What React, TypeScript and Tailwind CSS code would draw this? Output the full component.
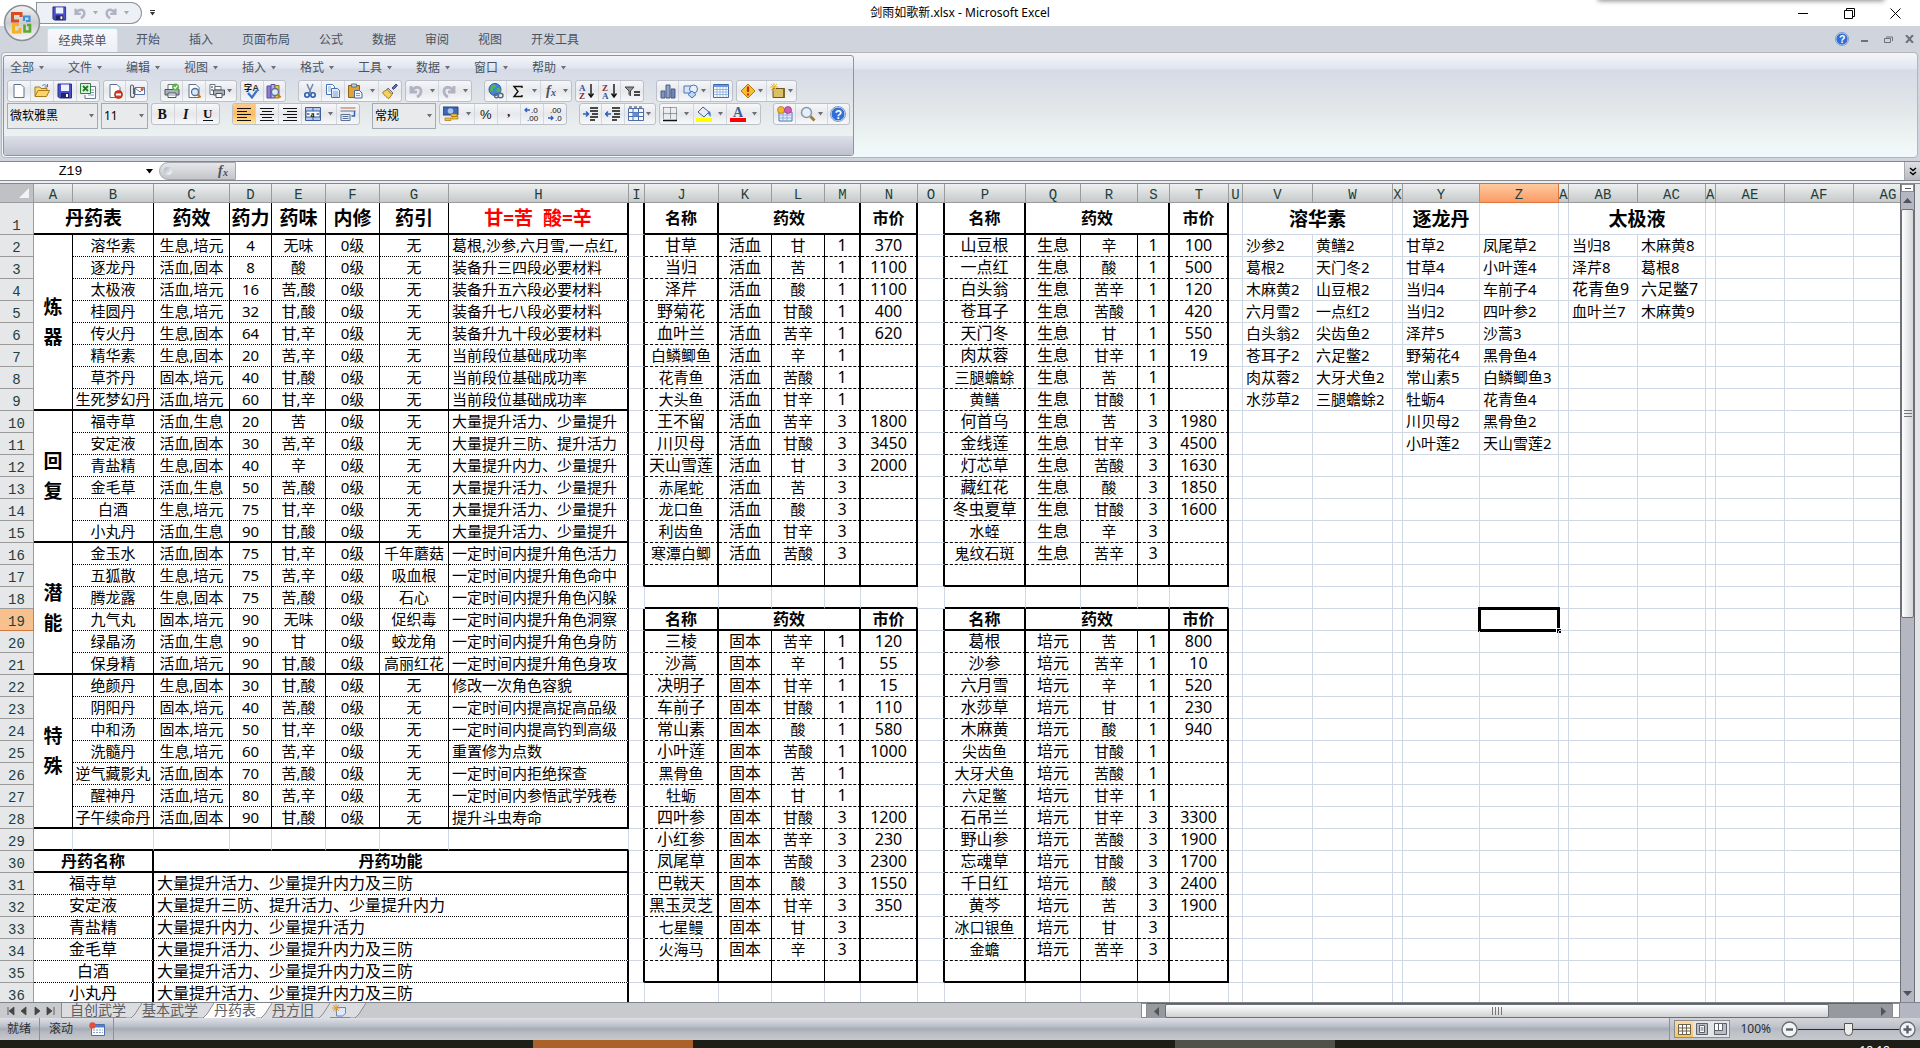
import { ReactNode } from "react";
import clsx from "clsx";

/* ---------- sheet model ---------- */

type Line = "grid" | "thin" | "thick" | "dotted" | "dashed";

type Cell = {
  text?: string;
  size?: 15 | 16 | 19;
  bold?: boolean;
  red?: boolean;
  left?: boolean;
  right?: Line;
  bottom?: Line;
  colSpan?: number;
  rowSpan?: number;
};

const columns: [string, string][] = [
  ["A", "w-[39px]"],
  ["B", "w-[81px]"],
  ["C", "w-[76px]"],
  ["D", "w-[42px]"],
  ["E", "w-[54px]"],
  ["F", "w-[54px]"],
  ["G", "w-[69px]"],
  ["H", "w-[180px]"],
  ["I", "w-[16px]"],
  ["J", "w-[74px]"],
  ["K", "w-[53px]"],
  ["L", "w-[53px]"],
  ["M", "w-[36px]"],
  ["N", "w-[57px]"],
  ["O", "w-[27px]"],
  ["P", "w-[81px]"],
  ["Q", "w-[55px]"],
  ["R", "w-[57px]"],
  ["S", "w-[32px]"],
  ["T", "w-[59px]"],
  ["U", "w-[14px]"],
  ["V", "w-[70px]"],
  ["W", "w-[80px]"],
  ["X", "w-[10px]"],
  ["Y", "w-[77px]"],
  ["Z", "w-[79px]"],
  ["AA", "w-[10px]"],
  ["AB", "w-[69px]"],
  ["AC", "w-[68px]"],
  ["AD", "w-[10px]"],
  ["AE", "w-[69px]"],
  ["AF", "w-[69px]"],
  ["AG", "w-[69px]"],
];

const rows = Array.from({ length: 36 }, (_, i) => i + 1);

const pills = [
  "溶华素 生息,培元 4 无味 无 葛根,沙参,六月雪,一点红,",
  "逐龙丹 活血,固本 8 酸 无 装备升三四段必要材料",
  "太极液 活血,培元 16 苦,酸 无 装备升五六段必要材料",
  "桂圆丹 生息,培元 32 甘,酸 无 装备升七八段必要材料",
  "传火丹 生息,固本 64 甘,辛 无 装备升九十段必要材料",
  "精华素 生息,固本 20 苦,辛 无 当前段位基础成功率",
  "草芥丹 固本,培元 40 甘,酸 无 当前段位基础成功率",
  "生死梦幻丹 活血,培元 60 甘,辛 无 当前段位基础成功率",
  "福寺草 活血,生息 20 苦 无 大量提升活力、少量提升",
  "安定液 活血,固本 30 苦,辛 无 大量提升三防、提升活力",
  "青盐精 生息,固本 40 辛 无 大量提升内力、少量提升",
  "金毛草 活血,生息 50 苦,酸 无 大量提升活力、少量提升",
  "白酒 生息,培元 75 甘,辛 无 大量提升活力、少量提升",
  "小丸丹 活血,生息 90 甘,酸 无 大量提升活力、少量提升",
  "金玉水 活血,固本 75 甘,辛 千年蘑菇 一定时间内提升角色活力",
  "五狐散 生息,培元 75 苦,辛 吸血根 一定时间内提升角色命中",
  "腾龙露 生息,固本 75 苦,酸 石心 一定时间内提升角色闪躲",
  "九气丸 固本,培元 90 无味 促织毒 一定时间内提升角色洞察",
  "绿晶汤 活血,生息 90 甘 蛟龙角 一定时间内提升角色身防",
  "保身精 活血,培元 90 甘,酸 高丽红花 一定时间内提升角色身攻",
  "绝颜丹 生息,固本 30 甘,酸 无 修改一次角色容貌",
  "阴阳丹 固本,培元 40 苦,酸 无 一定时间内提高捉高品级",
  "中和汤 固本,培元 50 甘,辛 无 一定时间内提高钓到高级",
  "洗髓丹 生息,培元 60 苦,辛 无 重置修为点数",
  "逆气藏影丸 活血,固本 70 苦,酸 无 一定时间内拒绝探查",
  "醒神丹 活血,培元 80 苦,辛 无 一定时间内参悟武学残卷",
  "子午续命丹 活血,固本 90 甘,酸 无 提升斗虫寿命",
];

const sections: [string, number, number][] = [
  ["炼器", 2, 9],
  ["回复", 10, 15],
  ["潜能", 16, 21],
  ["特殊", 22, 28],
];

const functions: [string, string][] = [
  ["福寺草", "大量提升活力、少量提升内力及三防"],
  ["安定液", "大量提升三防、提升活力、少量提升内力"],
  ["青盐精", "大量提升内力、少量提升活力"],
  ["金毛草", "大量提升活力、少量提升内力及三防"],
  ["白酒", "大量提升活力、少量提升内力及三防"],
  ["小丸丹", "大量提升活力、少量提升内力及三防"],
];

const huoxue =
  "甘草 甘 1 370|当归 苦 1 1100|泽芹 酸 1 1100|野菊花 甘酸 1 400|血叶兰 苦辛 1 620|白鳞鲫鱼 辛 1|花青鱼 苦酸 1|大头鱼 甘辛 1|王不留 苦辛 3 1800|川贝母 甘酸 3 3450|天山雪莲 甘 3 2000|赤尾蛇 苦 3|龙口鱼 酸 3|利齿鱼 甘辛 3|寒潭白鲫 苦酸 3";
const shengxi =
  "山豆根 辛 1 100|一点红 酸 1 500|白头翁 苦辛 1 120|苍耳子 苦酸 1 420|天门冬 甘 1 550|肉苁蓉 甘辛 1 19|三腿蟾蜍 苦 1|黄鳝 甘酸 1|何首乌 苦 3 1980|金线莲 甘辛 3 4500|灯芯草 苦酸 3 1630|藏红花 酸 3 1850|冬虫夏草 甘酸 3 1600|水蛭 辛 3|鬼纹石斑 苦辛 3";
const guben =
  "三棱 苦辛 1 120|沙蒿 辛 1 55|决明子 甘辛 1 15|车前子 甘酸 1 110|常山素 酸 1 580|小叶莲 苦酸 1 1000|黑骨鱼 苦 1|牡蛎 甘 1|四叶参 甘酸 3 1200|小红参 苦辛 3 230|凤尾草 苦酸 3 2300|巴戟天 酸 3 1550|黑玉灵芝 甘辛 3 350|七星鳗 甘 3|火海马 辛 3";
const peiyuan =
  "葛根 苦 1 800|沙参 苦辛 1 10|六月雪 辛 1 520|水莎草 甘 1 230|木麻黄 酸 1 940|尖齿鱼 甘酸 1|大牙犬鱼 苦酸 1|六足鳖 甘辛 1|石吊兰 甘辛 3 3300|野山参 苦酸 3 1900|忘魂草 甘酸 3 1700|千日红 酸 3 2400|黄芩 苦 3 1900|冰口银鱼 甘 3|金蟾 苦辛 3";

const recipes: [string, string][] = [
  ["V", "沙参2 葛根2 木麻黄2 六月雪2 白头翁2 苍耳子2 肉苁蓉2 水莎草2"],
  ["W", "黄鳝2 天门冬2 山豆根2 一点红2 尖齿鱼2 六足鳖2 大牙犬鱼2 三腿蟾蜍2"],
  ["Y", "甘草2 甘草4 当归4 当归2 泽芹5 野菊花4 常山素5 牡蛎4 川贝母2 小叶莲2"],
  ["Z", "凤尾草2 小叶莲4 车前子4 四叶参2 沙蒿3 黑骨鱼4 白鳞鲫鱼3 花青鱼4 黑骨鱼2 天山雪莲2"],
  ["AB", "当归8 泽芹8 花青鱼9 血叶兰7"],
  ["AC", "木麻黄8 葛根8 六足鳖7 木麻黄9"],
];

function buildSheet() {
  const cells = new Map<string, Cell | null>();
  const put = (col: string, row: number, cell: Cell | null) => cells.set(`${col}${row}`, cell);

  // 丹药表
  put("A", 1, { text: "丹药表", size: 19, bold: true, colSpan: 2, right: "thin", bottom: "thick" });
  put("B", 1, null);
  "药效 药力 药味 内修 药引".split(" ").forEach((text, i) => {
    put("CDEFG"[i], 1, { text, size: 19, bold: true, right: "thin", bottom: "thick" });
  });
  put("H", 1, { text: "甘=苦  酸=辛", size: 19, bold: true, red: true, right: "thick", bottom: "thick" });

  sections.forEach(([text, from, to]) => {
    for (let r = from + 1; r <= to; r++) put("A", r, null);
    put("A", from, { text, size: 19, bold: true, rowSpan: to - from + 1, right: "thin", bottom: "thick" });
  });
  const lastRows = sections.map((s) => s[2]);
  pills.forEach((line, i) => {
    const row = i + 2;
    const bottom: Line = lastRows.includes(row) ? "thick" : "dotted";
    const [name, effect, power, taste, lead, note] = line.split(" ");
    [name, effect, power, taste, "0级", lead].forEach((text, c) => {
      put("BCDEFG"[c], row, { text, right: "thin", bottom });
    });
    put("H", row, { text: note, left: true, right: "thick", bottom });
  });

  // 丹药功能
  "ABCDEFGH".split("").forEach((c) => put(c, 29, { bottom: "thick" }));
  [["丹药名称", "丹药功能"], ...functions].forEach(([name, text], i) => {
    const row = 30 + i;
    const head = i === 0;
    const bottom: Line = head ? "thick" : "dotted";
    "BDEFGH".split("").forEach((c) => put(c, row, null));
    put("A", row, { text: name, size: 16, bold: head, colSpan: 2, right: "thick", bottom });
    put("C", row, { text, size: 16, bold: head, left: !head, colSpan: 6, right: "thick", bottom });
  });

  // price tables
  const prices = (cols: string, edge: string, top: number, effect: string, data: string) => {
    const [a, b, c, d, e] = cols.split("");
    put(edge, top, { right: "thick" });
    put(a, top, { text: "名称", size: 16, bold: true, right: "thick", bottom: "thick" });
    put(b, top, { text: "药效", size: 16, bold: true, colSpan: 3, right: "thick", bottom: "thick" });
    put(c, top, null);
    put(d, top, null);
    put(e, top, { text: "市价", size: 16, bold: true, right: "thick", bottom: "thick" });
    [...data.split("|"), ""].forEach((line, i) => {
      const row = top + 1 + i;
      const [name, taste, grade, price] = line.split(" ");
      const bottom: Line = line ? "dashed" : "thick";
      const plain = effect === "生息" && [8, 14, 15].includes(row);
      put(edge, row, { right: "thick" });
      put(a, row, { text: name, size: price ? 16 : 15, right: "thick", bottom });
      put(b, row, { text: line && effect, size: 16, right: "thin", bottom: plain ? "grid" : bottom });
      put(c, row, { text: taste, right: "thin", bottom });
      put(d, row, { text: grade, size: 16, right: "thick", bottom });
      put(e, row, { text: price, size: 16, right: "thick", bottom });
    });
  };
  prices("JKLMN", "I", 1, "活血", huoxue);
  prices("PQRST", "O", 1, "生息", shengxi);
  "JKLMNPQRST".split("").forEach((c) => put(c, 18, { bottom: "thick" }));
  prices("JKLMN", "I", 19, "固本", guben);
  prices("PQRST", "O", 19, "培元", peiyuan);

  // recipes
  put("V", 1, { text: "溶华素", size: 19, bold: true, colSpan: 2 });
  put("W", 1, null);
  put("Y", 1, { text: "逐龙丹", size: 19, bold: true });
  put("AB", 1, { text: "太极液", size: 19, bold: true, colSpan: 2 });
  put("AC", 1, null);
  recipes.forEach(([col, list]) => {
    list.split(" ").forEach((text, i) => put(col, i + 2, { text, left: true }));
  });
  put("AB", 4, { text: "花青鱼9", size: 16, left: true });
  put("AC", 4, { text: "六足鳖7", size: 16, left: true });

  return cells;
}

const sheet = buildSheet();

const rightLine: Record<Line, string> = {
  grid: "border-r border-r-[#d0d7e5]",
  thin: "border-r border-r-black",
  thick: "border-r-2 border-r-black",
  dotted: "border-r border-r-black",
  dashed: "border-r border-r-black",
};

const bottomLine: Record<Line, string> = {
  grid: "border-b border-b-[#d0d7e5]",
  thin: "border-b border-b-black",
  thick: "border-b-2 border-b-black",
  dotted: "border-b border-b-black [border-bottom-style:dotted]",
  dashed: "border-b border-b-black [border-bottom-style:dashed]",
};

const textSize = { 15: "text-[15px]", 16: "text-[16px]", 19: "text-[19px]" };

function SheetCell({ cell, selected }: { cell: Cell; selected: boolean }) {
  const { text, size = 15, right = "grid", bottom = "grid" } = cell;
  return (
    <td
      colSpan={cell.colSpan}
      rowSpan={cell.rowSpan}
      className={clsx(
        "relative p-0",
        cell.bold ? "align-middle" : "align-top",
        rightLine[right],
        bottomLine[bottom],
      )}
    >
      {text ? (
        <div
          className={clsx(
            "whitespace-pre",
            textSize[size],
            cell.bold && "font-bold",
            cell.red && "text-[#ff0000]",
            cell.left ? "pl-[3px] text-left" : "text-center",
            cell.rowSpan ? "leading-[30px]" : "leading-5",
          )}
        >
          {cell.rowSpan ? text.split("").join("\n") : text}
        </div>
      ) : null}
      {selected ? (
        <div className="absolute -inset-0.5 border-[3px] border-black">
          <span className="absolute -right-1 -bottom-1 size-[5px] border-t border-l border-white bg-black" />
        </div>
      ) : null}
    </td>
  );
}

function Sheet() {
  return (
    <table className="w-[1923px] table-fixed border-separate border-spacing-0 bg-white font-['Noto_Sans','Noto_Sans_CJK_SC',sans-serif] text-black">
      <colgroup>
        <col className="w-[34px]" />
        {columns.map(([name, width]) => (
          <col key={name} className={width} />
        ))}
      </colgroup>
      <thead>
        <tr className="h-[19px] font-['Liberation_Mono',monospace] text-[14px] leading-[14px] text-[#1d3f3c]">
          <th className="border-r border-b border-[#9b9b9b] bg-[#bfc1c4] p-0">
            <svg className="mr-[3px] ml-auto block" width="12" height="12" viewBox="0 0 12 12">
              <path d="M11 1v10H1z" fill="#f2f3f4" />
            </svg>
          </th>
          {columns.map(([name]) => (
            <th
              key={name}
              scope="col"
              className={clsx(
                "overflow-hidden border-r border-b bg-linear-to-b p-0 pt-1 font-normal",
                name === "Z"
                  ? "border-[#d8783f] from-[#fdcb9f] to-[#fb9a66]"
                  : "border-[#9b9b9b] from-[#eef0f0] to-[#c6c9ca]",
              )}
            >
              {name}
            </th>
          ))}
        </tr>
      </thead>
      <tbody>
        {rows.map((row) => (
          <tr key={row} className={row === 1 ? "h-8" : "h-[22px]"}>
            <th
              scope="row"
              className={clsx(
                "border-r border-b p-0 align-bottom font-['Liberation_Mono',monospace] text-[14px] leading-4 font-normal text-[#1d3f3c]",
                row === 19 ? "border-[#d8783f] bg-[#f6c08f]" : "border-[#9b9b9b] bg-[#e6e7e8]",
              )}
            >
              {row}
            </th>
            {columns.map(([name]) => {
              const cell = sheet.get(`${name}${row}`);
              if (cell === null) return null;
              return <SheetCell key={name} cell={cell ?? {}} selected={name === "Z" && row === 19} />;
            })}
          </tr>
        ))}
      </tbody>
    </table>
  );
}

/* ---------- icons ---------- */

const page = <path d="M3 1.5h7l3 3v10H3z" fill="#fff" stroke="#5b7292" />;
const lens = (
  <>
    <circle cx="9" cy="9" r="3.5" fill="#d8ebfb" stroke="#56708f" strokeWidth="1.3" />
    <path d="M11.5 11.5l3 3" stroke="#c07a2a" strokeWidth="2.4" />
  </>
);
const printer = (
  <>
    <path d="M4 1.5h7V7H4z" fill="#fff" stroke="#6c7480" />
    <path d="M1 6.5h14V12H1z" fill="#a9b1bb" stroke="#4c5563" />
    <path d="M4 10h8v4.500H4z" fill="#fff" stroke="#4c5563" />
    <path d="M5 12h6" stroke="#8b95a3" />
  </>
);
const indentLines = <path d="M7 2h8M7 5h8M9 8h6M7 11h8M7 14h5" stroke="#111" strokeWidth="1.4" />;

const icons: Record<string, ReactNode> = {
  blank: page,
  open: (
    <>
      <path d="M1 13V4h5l1 1.500h6V8" fill="#f5d77b" stroke="#a97a1e" />
      <path d="M1 13.500L4 7.500h11.500l-3 6z" fill="#fbd567" stroke="#a97a1e" />
      <path d="M8 3c2-2 4-1.500 5 .5M13.500 1v3h-3" fill="none" stroke="#5d7ba8" />
    </>
  ),
  save: (
    <>
      <path d="M1 1h13.500v14H2.500L1 13.500z" fill="#4a50c8" stroke="#2b2f86" />
      <path d="M4 1.500h8V8H4z" fill="#eef1ff" />
      <path d="M4 10h8v5H4z" fill="#23265e" />
      <path d="M9 11h2v3H9z" fill="#fff" />
    </>
  ),
  excel: (
    <>
      <path d="M8 3.500h7.500v12H5V12" fill="#fff" stroke="#63779a" />
      <path d="M10 7h4M10 9.500h4M8 12h6" stroke="#7d9cc8" />
      <path d="M.5.5h10v10H.5z" fill="#dff1dc" stroke="#2f8436" />
      <path d="M3 3l5 5M8 3L3 8" stroke="#1d7a2a" strokeWidth="1.800" />
    </>
  ),
  deny: (
    <>
      {page}
      <circle cx="11.500" cy="11.500" r="4" fill="#d83a1f" stroke="#9c2410" strokeWidth=".7" />
      <path d="M9 11.500h5" stroke="#fff" strokeWidth="1.800" />
    </>
  ),
  mail: (
    <>
      <path d="M6 4.500h9.500v7H6z" fill="#fff" stroke="#5777a8" />
      <path d="M6 5l5 4 4.500-4" fill="none" stroke="#5777a8" />
      <circle cx="13" cy="6.500" r="1.400" fill="#df5326" />
      <path d="M5.500 5v7.500a2 2 0 01-4 0V3.500a1.500 1.500 0 013 0V11" fill="none" stroke="#5a6472" strokeWidth="1.100" />
    </>
  ),
  quickPrint: (
    <>
      {printer}
      <circle cx="11.500" cy="4" r="3.500" fill="#5db446" />
      <path d="M9.800 4l1.400 1.400 2.200-2.800" fill="none" stroke="#fff" strokeWidth="1.200" />
    </>
  ),
  preview: (
    <>
      {page}
      {lens}
    </>
  ),
  print: (
    <>
      <path d="M1 1.500h5v10H1z" fill="#fff" stroke="#6c7480" />
      <path d="M2 4h2M2 7h2" stroke="#333" />
      <path d="M6 3.500h6V7H6z" fill="#fff" stroke="#6c7480" />
      <path d="M4.500 7h11v5h-11z" fill="#a9b1bb" stroke="#4c5563" />
      <path d="M7 10.500h6v4H7z" fill="#fff" stroke="#4c5563" />
    </>
  ),
  spell: (
    <>
      <text x="0" y="8" fontSize="8" fontWeight="bold" fill="#111" fontFamily="'Noto Sans CJK SC', sans-serif">
        字
      </text>
      <text x="8.500" y="8" fontSize="9" fontWeight="bold" fill="#333" fontFamily="'Liberation Sans', sans-serif">
        A
      </text>
      <path d="M4 10l4 4.500 5-7" fill="none" stroke="#3b6fd0" strokeWidth="2.200" />
    </>
  ),
  research: (
    <>
      <path d="M1 3h4v12H1z" fill="#8d7fd0" stroke="#5a4ea0" />
      <path d="M5 1.500h4V15H5z" fill="#b9aee6" stroke="#5a4ea0" />
      <path d="M9 2.500h4V15H9z" fill="#e7c256" stroke="#98741d" />
      {lens}
    </>
  ),
  cut: (
    <>
      <path d="M5 1l4 9M11 1L7 10" stroke="#6f86a6" strokeWidth="1.500" />
      <circle cx="5" cy="12" r="2.200" fill="none" stroke="#2a5db0" strokeWidth="1.600" />
      <circle cx="11" cy="12" r="2.200" fill="none" stroke="#2a5db0" strokeWidth="1.600" />
    </>
  ),
  copy: (
    <>
      <path d="M1.500 1.500h6l2 2v8h-8z" fill="#fff" stroke="#4673b4" />
      <path d="M6.500 5.500h6l2 2v7h-8z" fill="#dfeafa" stroke="#4673b4" />
      <path d="M8 9h5M8 11h5M8 13h5M3 4h3M3 6h3M3 8h3" stroke="#6a94d0" strokeWidth=".8" />
    </>
  ),
  paste: (
    <>
      <path d="M1.500 2.500h11v12h-11z" fill="#dfa33a" stroke="#8f6418" />
      <path d="M4.500 1h5v3h-5z" fill="#c9ced6" stroke="#6b727d" />
      <path d="M7.500 7.500h5l2.500 2.500v5H7.500z" fill="#f3f7fd" stroke="#4b6794" />
      <path d="M9 10.500h4M9 12.500h4" stroke="#7c9cc8" />
    </>
  ),
  brush: (
    <>
      <path d="M10 5l4-4 1.500 1.500-4 4z" fill="#6a6fb5" stroke="#3f437f" />
      <path d="M6 5l5 5-1.500 1.500L5 7z" fill="#c8ccd4" stroke="#666d78" />
      <path d="M5 6.500L.5 9.500c2 3 4 5 6.500 6l3-4z" fill="#f4d160" stroke="#a07c22" />
    </>
  ),
  undo: <path d="M3 3v6h6M3.500 8.500C6 3 13 3 13 8c0 3-2 5-4 6" fill="none" stroke="#b3b1c4" strokeWidth="2.800" />,
  redo: <path d="M13 3v6H7M12.500 8.500C10 3 3 3 3 8c0 3 2 5 4 6" fill="none" stroke="#b3b1c4" strokeWidth="2.800" />,
  link: (
    <>
      <circle cx="7" cy="6.500" r="6" fill="#3f86d8" stroke="#235a9e" />
      <path d="M3 3c2-2 5-2 5 0S5 5 5 7s-2 2-3 1zM9 5c2-1 4 1 3.500 3S9 9 8.500 8z" fill="#54b34a" />
      <path d="M6.500 12.500c0-3 4-3 4 0s-4 3-4 0zM10 12.500c0-3 5-3 5 0s-5 3-5 0z" fill="none" stroke="#5b6b84" strokeWidth="1.500" />
    </>
  ),
  sum: <path d="M12 5V3.500H4L8 8.500l-4 5h8V12" fill="none" stroke="#111" strokeWidth="1.400" />,
  sortAsc: (
    <>
      <text x="0" y="7.500" fontSize="9" fontWeight="bold" fill="#35549c" fontFamily="'Liberation Serif', serif">
        A
      </text>
      <text x="0" y="15.500" fontSize="9" fontWeight="bold" fill="#8b2a2f" fontFamily="'Liberation Serif', serif">
        Z
      </text>
      <path d="M12 1v12M9.500 10.500L12 14l2.500-3.500" fill="none" stroke="#111" strokeWidth="1.400" />
    </>
  ),
  sortDesc: (
    <>
      <text x="0" y="7.500" fontSize="9" fontWeight="bold" fill="#8b2a2f" fontFamily="'Liberation Serif', serif">
        Z
      </text>
      <text x="0" y="15.500" fontSize="9" fontWeight="bold" fill="#35549c" fontFamily="'Liberation Serif', serif">
        A
      </text>
      <path d="M12 1v12M9.500 10.500L12 14l2.500-3.500" fill="none" stroke="#111" strokeWidth="1.400" />
    </>
  ),
  filter: (
    <>
      <path d="M1 4h9L6.500 8v5L5 11.500V8z" fill="#8d949c" stroke="#444" />
      <path d="M10 9h6M10 12h6" stroke="#111" strokeWidth="1.600" />
    </>
  ),
  chart: (
    <>
      <path d="M1 8h4v7H1z" fill="#7f93bb" stroke="#4a5d86" />
      <path d="M6 2h4v13H6z" fill="#8ea2c8" stroke="#4a5d86" />
      <path d="M11 6h4v9h-4z" fill="#6f84b0" stroke="#4a5d86" />
    </>
  ),
  shapes: (
    <>
      <path d="M1 3h9v7H1z" fill="#d8e6f8" stroke="#4876b4" />
      <circle cx="10.500" cy="6" r="4" fill="#e8f1fc" stroke="#4876b4" />
      <path d="M9 8l4 3.500-4 3.500-4-3.500z" fill="#bcd5f3" stroke="#4876b4" />
    </>
  ),
  table: (
    <>
      <path d="M.5 1.500h15v13H.5z" fill="#fff" stroke="#3c67a8" />
      <path d="M.5 2h15v2H.5z" fill="#6d97d6" />
      <path d="M.5 6.500h15M.5 9h15M.5 11.500h15M4 4v10.500M7 4v10.500M10 4v10.500M13 4v10.500" stroke="#86a7d8" strokeWidth=".8" />
    </>
  ),
  warn: (
    <>
      <path d="M8 1l7 7-7 7-7-7z" fill="#f6c12c" stroke="#b07c10" />
      <path d="M8 3.500v5.500M8 10.500v2" stroke="#d3261b" strokeWidth="2.200" />
    </>
  ),
  folder: (
    <>
      <path d="M3 5.500h11.500v9H3z" fill="#d9bf66" stroke="#6a571c" />
      <path d="M13 5.500h2v9h-2z" fill="#7b6a2c" />
      <path d="M4 0v8M0 4h8M1 1l6 6M7 1L1 7" stroke="#eab52a" />
    </>
  ),
  bold: (
    <text x="2.500" y="13" fontSize="14" fontWeight="bold" fontFamily="'Liberation Serif', serif">
      B
    </text>
  ),
  italic: (
    <text x="5" y="13" fontSize="14" fontStyle="italic" fontWeight="bold" fontFamily="'Liberation Serif', serif">
      I
    </text>
  ),
  underline: (
    <>
      <text x="3" y="12" fontSize="13" fontWeight="bold" fontFamily="'Liberation Serif', serif">
        U
      </text>
      <path d="M3 14.500h10" stroke="#111" strokeWidth="1.200" />
    </>
  ),
  alignLeft: <path d="M1 2.500h14M1 5.500h10M1 8.500h14M1 11.500h10M1 14.500h14" stroke="#111" />,
  alignCenter: <path d="M1 2.500h14M3 5.500h10M1 8.500h14M3 11.500h10M1 14.500h14" stroke="#111" />,
  alignRight: <path d="M1 2.500h14M5 5.500h10M1 8.500h14M5 11.500h10M1 14.500h14" stroke="#111" />,
  merge: (
    <>
      <path d="M.5 1.500h15v13H.5zM8 1.500v13" fill="#b8cbea" stroke="#3c5f9c" />
      <path d="M1 5h14v6H1z" fill="#fff" stroke="#3c5f9c" />
      <text x="5.500" y="10.500" fontSize="8" fontWeight="bold" fontFamily="'Liberation Serif', serif">
        a
      </text>
      <path d="M2 8h2.500M11.500 8H14" stroke="#3c5f9c" strokeWidth="1.400" />
    </>
  ),
  wrap: (
    <>
      <path d="M.5 2h15" stroke="#c2673c" />
      <path d="M.5 5h15M1 8.500h9v6H1zM2.500 10.500h6M2.500 12.500h6" fill="none" stroke="#5a7199" />
      <path d="M14.500 5v5h-3" fill="none" stroke="#2f62b5" strokeWidth="1.400" />
    </>
  ),
  currency: (
    <>
      <path d="M0 1h15v8H0z" fill="#3d68b5" stroke="#27457f" />
      <circle cx="7.500" cy="5" r="2.800" fill="#a8c3ee" />
      <path d="M8 8h6v2.500H8zM9 10.500h6V13H9zM2 12h6v2.500H2z" fill="#f2c23b" stroke="#a37715" strokeWidth=".7" />
    </>
  ),
  percent: (
    <text x="2" y="13" fontSize="13" fontFamily="'Liberation Sans', sans-serif">
      %
    </text>
  ),
  comma: (
    <text x="6" y="10" fontSize="13" fontWeight="bold" fontFamily="'Liberation Serif', serif">
      ,
    </text>
  ),
  decMore: (
    <>
      <text x="7" y="7" fontSize="8" fontFamily="'Liberation Sans', sans-serif">
        .0
      </text>
      <text x="3" y="15" fontSize="8" fontFamily="'Liberation Sans', sans-serif">
        .00
      </text>
      <path d="M6 4H1M3 2L1 4l2 2" fill="none" stroke="#2a5fc0" strokeWidth="1.300" />
    </>
  ),
  decLess: (
    <>
      <text x="3" y="7" fontSize="8" fontFamily="'Liberation Sans', sans-serif">
        .00
      </text>
      <text x="8" y="15" fontSize="8" fontFamily="'Liberation Sans', sans-serif">
        .0
      </text>
      <path d="M1 12h5M4 10l2 2-2 2" fill="none" stroke="#2a5fc0" strokeWidth="1.300" />
    </>
  ),
  indent: (
    <>
      {indentLines}
      <path d="M0 8h5M3 5.500L5.500 8 3 10.500" fill="none" stroke="#2a5fc0" strokeWidth="1.500" />
    </>
  ),
  outdent: (
    <>
      {indentLines}
      <path d="M6 8H1M3 5.500L.5 8 3 10.500" fill="none" stroke="#2a5fc0" strokeWidth="1.500" />
    </>
  ),
  orient: (
    <>
      <path d="M.5 2.500h15v12H.5zM.5 6.500h15M.5 10.500h15M5 2.500v12M10.500 2.500v12" fill="#f3f7fd" stroke="#4c6da6" />
      <path d="M5 6.500h5.500v4H5z" fill="#5f8ee0" />
      <path d="M1 1h3M6 1h3M11 1h3" stroke="#333" />
    </>
  ),
  borders: (
    <>
      <path d="M1.500 1.500h13v12M1.500 1.500v12M8.500 1.500v12M1.500 7.500h13" fill="none" stroke="#555" strokeDasharray="1 1" />
      <path d="M1 14.500h14" stroke="#111" strokeWidth="1.400" />
    </>
  ),
  fill: (
    <>
      <path d="M7 1l6 5-5 5-6-5z" fill="#e6ecf6" stroke="#4a5c7e" />
      <path d="M13 5c2 1 2 4 1.500 6-1-1-2-3-2.500-4z" fill="#3f78cf" />
      <path d="M0 12h16v4H0z" fill="#ffff00" />
    </>
  ),
  fontColor: (
    <>
      <text x="3" y="11" fontSize="14" fontWeight="bold" fill="#3c5f94" fontFamily="'Liberation Serif', serif">
        A
      </text>
      <path d="M0 12h16v4H0z" fill="#ff0000" />
    </>
  ),
  styles: (
    <>
      <path d="M2 6h13v9H2z" fill="#e9effa" stroke="#4876b4" />
      <path d="M3 9h11M3 12h11M6 7v8M10 7v8" stroke="#8eabd8" />
      <circle cx="4" cy="4" r="3.500" fill="#f2b52b" stroke="#a77510" strokeWidth=".7" />
      <circle cx="11" cy="4" r="3.500" fill="#d759b8" stroke="#93307b" strokeWidth=".7" />
    </>
  ),
  zoom: (
    <>
      <circle cx="6.500" cy="6.500" r="5" fill="#e3f0fb" stroke="#8b96a6" strokeWidth="1.500" />
      <path d="M10.500 10.500l4 4" stroke="#9c7a32" strokeWidth="2.800" />
    </>
  ),
  help: (
    <>
      <circle cx="8" cy="8" r="7" fill="#2f6fd6" stroke="#dfe9f8" />
      <circle cx="8" cy="8" r="7.500" fill="none" stroke="#6c87b4" strokeWidth=".8" />
      <text x="4.700" y="12.500" fontSize="12" fontWeight="bold" fill="#fff" fontFamily="'Liberation Sans', sans-serif">
        ?
      </text>
    </>
  ),
  fx: (
    <>
      <text x="1" y="12" fontSize="14" fontStyle="italic" fontWeight="bold" fill="currentColor" fontFamily="'Liberation Serif', serif">
        f
      </text>
      <text x="6" y="13" fontSize="10" fontStyle="italic" fontWeight="bold" fill="currentColor" fontFamily="'Liberation Serif', serif">
        x
      </text>
    </>
  ),
  macro: (
    <>
      <path d="M2.500 3.500h13v11h-13z" fill="#fff" stroke="#4c6fb0" />
      <path d="M3 4h12v2.500H3z" fill="#4f7fd0" />
      <path d="M4 9h10M4 11.500h10" stroke="#86a2cf" strokeDasharray="2 1" />
      <circle cx="3.500" cy="4.500" r="3.200" fill="#e0533a" />
    </>
  ),
};

function Icon({ name, size = 16 }: { name: string; size?: number }) {
  return (
    <svg width={size} height={size} viewBox="0 0 16 16" fill="#111" className="shrink-0" aria-hidden="true">
      {icons[name]}
    </svg>
  );
}

function Caret({ className = "text-[#6b6f76]" }: { className?: string }) {
  return (
    <svg width="5" height="4" viewBox="0 0 5 4" className={clsx("shrink-0", className)} aria-hidden="true">
      <path d="M0 0h5L2.500 3.500z" fill="currentColor" />
    </svg>
  );
}

/* ---------- ribbon ---------- */

// "icon", "icon^" for an attached arrow, "^" for an arrow of its own
const toolbarTop: [string, string][] = [
  ["w-[93px]", "blank open save excel"],
  ["ml-[3px] w-[45px]", "deny mail"],
  ["ml-3 w-[77px]", "quickPrint preview print^"],
  ["ml-[3px] w-[46px]", "spell research"],
  ["ml-3 w-[104px]", "cut copy paste ^ brush"],
  ["ml-[3px] w-[67px]", "undo ^ redo ^"],
  ["ml-3 w-[88px]", "link sum ^ fx^"],
  ["ml-[3px] w-[69px]", "sortAsc sortDesc filter"],
  ["ml-3 w-[77px]", "chart shapes^ table"],
  ["ml-[3px] w-[61px]", "warn^ folder^"],
];

const toolbarLeft: [string, string][] = [
  ["ml-[3px] w-[69px]", "bold italic underline"],
  ["ml-3 w-[128px]", "alignLeft alignCenter alignRight merge ^ wrap"],
];

const toolbarRight: [string, string][] = [
  ["ml-[3px] w-[128px]", "currency ^ percent comma decMore decLess"],
  ["ml-3 w-[77px]", "indent outdent orient^"],
  ["ml-[3px] w-[102px]", "borders ^ fill ^ fontColor ^"],
  ["ml-3 w-[77px]", "styles zoom^ help"],
];

function Group({ width, items }: { width: string; items: string }) {
  return (
    <div
      className={clsx(
        "flex h-[22px] shrink-0 overflow-hidden rounded-[3px] border border-[#bcc0c8] bg-linear-to-b from-[#f6f7f9] via-[#e6e8ec] to-[#f7f8f9]",
        width,
      )}
    >
      {items.split(" ").map((item, i) => {
        const name = item.replace("^", "");
        const arrow = item.endsWith("^");
        return (
          <button
            key={i}
            aria-label={name || "more"}
            className={clsx(
              "flex items-center justify-center border-l border-[#d3d6dc] first:border-l-0",
              item === "^" ? "w-3 shrink-0 border-l-0" : arrow ? "grow-[1.4] basis-0 gap-0.5" : "grow basis-0",
              item === "alignLeft" && "bg-linear-to-b from-[#fbcb8d] via-[#fdbb5e] to-[#fee8a0]",
            )}
          >
            {name ? <Icon name={name} /> : null}
            {arrow ? <Caret /> : null}
          </button>
        );
      })}
    </div>
  );
}

function Combo({ label, value, width }: { label: string; value: string; width: string }) {
  return (
    <div className={clsx("relative h-[26px] shrink-0", width)}>
      <select
        aria-label={label}
        defaultValue={value}
        className="h-full w-full appearance-none border border-[#a3aab4] bg-[#e8eaec] pl-0.5 text-[12px] leading-4 text-black"
      >
        <option>{value}</option>
      </select>
      <span className="pointer-events-none absolute top-[11px] right-1">
        <Caret />
      </span>
    </div>
  );
}

const ribbonTabs = ["经典菜单", "开始", "插入", "页面布局", "公式", "数据", "审阅", "视图", "开发工具"];
const menus = ["全部", "文件", "编辑", "视图", "插入", "格式", "工具", "数据", "窗口", "帮助"];

function OfficeButton() {
  return (
    <button aria-label="Office" className="absolute top-1 left-[3px] z-10">
      <svg width="38" height="38" viewBox="0 0 38 38">
        <defs>
          <linearGradient id="orb" x1="0" y1="0" x2="0" y2="1">
            <stop offset="0" stopColor="#f4f4f6" />
            <stop offset=".5" stopColor="#c9cbd0" />
            <stop offset="1" stopColor="#fafafa" />
          </linearGradient>
        </defs>
        <circle cx="19" cy="19" r="17.500" fill="url(#orb)" stroke="#8c8f96" strokeWidth="1.500" />
        <g fill="none" strokeWidth="3">
          <path d="M16 17H9.500V9.500H18V13" stroke="#dc4a17" />
          <path d="M21 17v-4.500h5.500V17H23" stroke="#3f8fd8" strokeWidth="2.200" />
          <path d="M16 20.500h-5.500V28H17v-4" stroke="#f4b21f" />
          <path d="M21.500 20.500v7H27V21h-3" stroke="#5fa82e" strokeWidth="2.600" />
        </g>
      </svg>
    </button>
  );
}

function TitleBar() {
  return (
    <header className="relative flex h-[26px] shrink-0 items-center bg-white">
      <OfficeButton />
      <div className="ml-9 flex h-[22px] w-[106px] items-center gap-1 rounded-tl-[4px] rounded-bl-[14px] rounded-r-full border border-[#8f929a] bg-[#edf0f5] pl-[15px]">
        <button aria-label="save">
          <Icon name="save" size={15} />
        </button>
        <button aria-label="undo" className="ml-0.5 flex items-center gap-1.5">
          <Icon name="undo" size={14} />
          <Caret className="text-[#a9a9b4]" />
        </button>
        <button aria-label="redo" className="ml-0.5 flex items-center gap-1.5">
          <Icon name="redo" size={14} />
          <Caret className="text-[#a9a9b4]" />
        </button>
      </div>
      <button aria-label="customize" className="ml-2 border-t border-[#333] pt-px">
        <Caret className="text-[#333]" />
      </button>
      <h1 className="absolute inset-x-0 text-center text-[12px] leading-6 text-black">剑雨如歌新.xlsx - Microsoft Excel</h1>
      <div className="absolute -top-2 right-[37px] h-2 w-[284px] shadow-[0_0_5px_1px_#8a8a8a]" />
      <div className="relative ml-auto flex h-full pr-0.5">
        <button aria-label="minimize" className="flex w-[46px] items-center justify-center">
          <span className="h-px w-2.5 bg-black" />
        </button>
        <button aria-label="restore" className="flex w-[46px] items-center justify-center">
          <svg width="11" height="11" viewBox="0 0 11 11" fill="none" stroke="#000">
            <path d="M.5 2.500h8v8h-8zM2.500 2.500v-2h8v8h-2" />
          </svg>
        </button>
        <button aria-label="close" className="flex w-[46px] items-center justify-center">
          <svg width="11" height="11" viewBox="0 0 11 11" fill="none" stroke="#000">
            <path d="M.5.5l10 10M10.500.5l-10 10" />
          </svg>
        </button>
      </div>
    </header>
  );
}

function Ribbon() {
  return (
    <div className="shrink-0 bg-[#d0d4dd] text-[12px] text-[#4a5260]">
      <nav className="flex h-[26px] items-end gap-px pl-[47px]">
        {ribbonTabs.map((tab, i) => (
          <button
            key={tab}
            className={clsx(
              "h-6 leading-5",
              i === 0
                ? "mr-[3px] w-[71px] rounded-t-[3px] border border-b-0 border-[#b8ecf0] bg-linear-to-b from-[#f8f9fc] to-[#eceff5]"
                : "px-[14px]",
            )}
          >
            {tab}
          </button>
        ))}
        <div className="ml-auto flex h-full items-center gap-3 pr-1.5">
          <button aria-label="help">
            <Icon name="help" size={14} />
          </button>
          <button aria-label="minimize workbook" className="mt-1 h-0.5 w-[7px] bg-[#6c7078]" />
          <button aria-label="restore workbook" className="ml-1">
            <svg width="9" height="7" viewBox="0 0 9 7" fill="none" stroke="#6c7078">
              <path d="M.5 2.500h6v4h-6zM2 1h6.500v4" />
            </svg>
          </button>
          <button aria-label="close workbook">
            <svg width="9" height="8" viewBox="0 0 9 8" fill="none" stroke="#6c7078" strokeWidth="2">
              <path d="M1 0l7 8M8 0L1 8" />
            </svg>
          </button>
        </div>
      </nav>
      <div className="mr-0.5 ml-px flex h-[106px] rounded-[4px] border border-[#b4b6ba] bg-[linear-gradient(#f4f5f9_0,#e0e5ee_16px,#d5dae6_17px,#e4e8ea_60px,#eef7f5_90px,#f0f8fc_106px)]">
        <div className="mt-0.5 ml-px flex h-[101px] w-[851px] flex-col rounded-[3px] border border-[#8f939b] bg-[linear-gradient(#f4f5f9_0,#e0e5ee_12px,#d5dae6_13px,#e4e8ea_55px,#ecf1f1_80px)]">
          <div className="flex h-6 shrink-0 items-center pl-1.5">
            {menus.map((menu, i) => (
              <button key={i} className="flex w-[58px] items-center gap-[5px]">
                {menu}
                <Caret />
              </button>
            ))}
          </div>
          <div className="flex shrink-0 pl-[3px]">
            {toolbarTop.map(([width, items]) => (
              <Group key={items} width={width} items={items} />
            ))}
          </div>
          <div className="mt-px flex shrink-0 pl-[3px]">
            <Combo label="字体" value="微软雅黑" width="w-[91px]" />
            <Combo label="字号" value="11" width="ml-[3px] w-[47px]" />
            {toolbarLeft.map(([width, items]) => (
              <Group key={items} width={width} items={items} />
            ))}
            <Combo label="数字格式" value="常规" width="ml-3 w-[64px]" />
            {toolbarRight.map(([width, items]) => (
              <Group key={items} width={width} items={items} />
            ))}
          </div>
          <div className="mt-auto h-[19px] shrink-0 rounded-b-[3px] bg-linear-to-b from-[#dddfe8] to-[#bfc2ce]" />
        </div>
      </div>
    </div>
  );
}

function FormulaBar() {
  return (
    <div className="shrink-0 bg-[#d0d4dd] pt-[3px]">
      <div className="flex h-5 border-y border-[#85878c] bg-white">
        <input
          aria-label="名称框"
          defaultValue="Z19"
          className="w-[141px] pt-0.5 text-center font-['Liberation_Mono',monospace] text-[13px] leading-4 text-black"
        />
        <button aria-label="names" className="flex w-4 items-center justify-center">
          <svg width="7" height="5" viewBox="0 0 7 5">
            <path d="M0 0h7L3.500 4.500z" />
          </svg>
        </button>
        <div className="ml-0.5 flex w-[77px] items-center justify-between rounded-l-full border border-[#a5a7ab] bg-linear-to-b from-[#e6e7ea] to-[#c3c5c9] pr-0.5 pl-1">
          <span className="size-2 rounded-full bg-linear-to-br from-[#a9b0c0] to-white" />
          <button aria-label="插入函数" className="text-[#4c4f55]">
            <Icon name="fx" />
          </button>
        </div>
        <input aria-label="编辑栏" className="min-w-0 flex-1 px-1 text-[12px]" />
        <button
          aria-label="expand"
          className="flex w-4 items-center justify-center border-l border-[#a5a7ab] bg-linear-to-b from-[#dfe0e3] to-[#b8babf]"
        >
          <svg width="8" height="9" viewBox="0 0 8 9" fill="none" stroke="#000" strokeWidth="1.500">
            <path d="M1 1l3 2.500L7 1M1 5l3 2.500L7 5" />
          </svg>
        </button>
      </div>
      <div className="h-[3px] border-b border-[#85878c] bg-[#eceef6]" />
    </div>
  );
}

/* ---------- bottom ---------- */

function VerticalScroll() {
  return (
    <div className="flex w-5 shrink-0 border-l border-[#6d7076] bg-[#e4e5e8]">
      <div className="flex w-[14px] flex-col items-center border-r border-[#6d7076] bg-[#b4b7c2]">
        <div className="flex h-2 w-full items-center justify-center border border-[#8a8c92] bg-white">
          <span className="h-px w-1.5 bg-[#555]" />
        </div>
        <button aria-label="scroll up" className="flex h-[17px] items-center">
          <svg width="9" height="5" viewBox="0 0 9 5">
            <path d="M4.500 0L9 5H0z" fill="#4f525a" />
          </svg>
        </button>
        <div className="flex h-[50%] w-full flex-col items-center justify-center gap-0.5 rounded-[2px] border border-[#6d7076] bg-linear-to-r from-white to-[#d4d5d9]">
          <span className="h-px w-2 bg-[#777]" />
          <span className="h-px w-2 bg-[#777]" />
          <span className="h-px w-2 bg-[#777]" />
        </div>
        <button aria-label="scroll down" className="mt-auto flex h-[17px] items-center">
          <svg width="9" height="5" viewBox="0 0 9 5">
            <path d="M4.500 5L9 0H0z" fill="#4f525a" />
          </svg>
        </button>
      </div>
    </div>
  );
}

function Slant({ from, to }: { from: string; to: string }) {
  return (
    <svg width="16" height="16" viewBox="0 0 16 16" className="shrink-0" aria-hidden="true">
      <path d="M0 0h16v16H0z" fill={to} />
      <path d="M0 0h16L9 11l-5 4.500H0z" fill={from} />
      <path d="M16 0L9 11l-4 4H0" fill="none" stroke="#8a8c90" />
    </svg>
  );
}

const sheetTabs = ["自创武学", "基本武学", "丹药表", "丹方旧"];
const activeTab = 2;

function SheetBar() {
  const arrows = ["M8 1v8L3 5zM2 1v8", "M7 1v8L2 5z", "M2 1v8l5-4z", "M1 1v8l5-4zM8 1v8"];
  const tabColor = (i: number) => (i === activeTab ? "#fdfdfd" : "#dcdde0");
  return (
    <div className="flex h-4 shrink-0 overflow-hidden border-t border-[#808389] bg-[#c9cacd]">
      <div className="flex w-[62px] items-center justify-around border-r border-[#8a8c90] px-1">
        {arrows.map((d) => (
          <button key={d} aria-label="scroll tabs">
            <svg width="9" height="10" viewBox="0 0 9 10" fill="#444" stroke="#444" strokeWidth=".8">
              <path d={d} />
            </svg>
          </button>
        ))}
      </div>
      {sheetTabs.map((tab, i) => (
        <button key={tab} className="flex shrink-0 text-[14px] leading-[14px] text-[#5c5e62]">
          <span
            className={clsx(
              "block h-[15px]",
              i === 0 && "pl-2",
              i === activeTab ? "bg-[#fdfdfd]" : "border-b border-[#8a8c90] bg-[#dcdde0]",
            )}
          >
            {tab}
          </span>
          <Slant from={tabColor(i)} to={tabColor(i + 1)} />
        </button>
      ))}
      <button aria-label="new sheet" className="flex shrink-0">
        <span className="flex h-[15px] w-5 items-center border-b border-[#8a8c90] bg-[#dcdde0] pl-0.5">
          <svg width="15" height="13" viewBox="0 0 15 13">
            <path d="M4.500 3.500h9v6l-3 2.500h-6z" fill="#dfe8f8" stroke="#6c84b5" />
            <path d="M4 0v8M0 4h8M1 1l6 6M7 1L1 7" stroke="#e09a2a" />
          </svg>
        </span>
        <Slant from="#dcdde0" to="#c9cacd" />
      </button>
      <div className="ml-auto flex w-[759px]">
        <div className="w-1.5 border border-[#8a8c92] bg-white" />
        <div className="flex flex-1 border-t border-[#5f6268] bg-[#96999d]">
          <button aria-label="scroll left" className="flex w-[18px] items-center justify-center">
            <svg width="5" height="9" viewBox="0 0 5 9">
              <path d="M0 4.500L5 0v9z" fill="#4f525a" />
            </svg>
          </button>
          <div className="flex flex-1 items-center justify-center gap-0.5 rounded-[2px] border border-[#6d7076] bg-linear-to-b from-white to-[#cfd0d3]">
            <span className="h-2 w-px bg-[#777]" />
            <span className="h-2 w-px bg-[#777]" />
            <span className="h-2 w-px bg-[#777]" />
            <span className="h-2 w-px bg-[#777]" />
          </div>
          <button aria-label="scroll right" className="flex w-[63px] items-center justify-end pr-1.5">
            <svg width="5" height="9" viewBox="0 0 5 9">
              <path d="M5 4.500L0 0v9z" fill="#4f525a" />
            </svg>
          </button>
        </div>
        <div className="w-2 border border-[#8a8c92] bg-white" />
      </div>
      <div className="w-5 bg-[#b4b7c2]" />
    </div>
  );
}

function ZoomButton({ label, d }: { label: string; d: string }) {
  return (
    <button aria-label={label}>
      <svg width="17" height="17" viewBox="0 0 17 17">
        <circle cx="8.500" cy="8.500" r="7.500" fill="#f2f3f5" stroke="#6b6e74" strokeWidth="1.400" />
        <path d={d} stroke="#5b5f68" strokeWidth="2.400" />
      </svg>
    </button>
  );
}

function StatusBar() {
  return (
    <footer className="flex h-[22px] shrink-0 items-center bg-[linear-gradient(#dfe0e6_0,#bcc0ca_8px,#a6abb5_11px,#b6b9c0_14px,#c8c9ce_22px)] text-[12px] text-[#2b2f36]">
      <span className="flex h-full w-10 items-center border-r border-[#8d9098] pl-[7px]">就绪</span>
      <span className="flex h-full w-[74px] items-center gap-4 border-r border-[#8d9098] pl-[9px]">
        滚动
        <Icon name="macro" />
      </span>
      <div className="ml-auto flex h-full items-center border-l border-[#8d9098] bg-[#c6c8ce]/50 pr-1 pl-1">
        <div className="flex h-[18px] w-14 border border-[#8a8c92] bg-[#e4e5e8]">
          <button aria-label="普通" className="flex flex-1 items-center justify-center bg-linear-to-b from-[#fbd9a4] to-[#fcc552]">
            <svg width="13" height="11" viewBox="0 0 13 11" fill="#fff" stroke="#6a6250">
              <path d="M.5.5h12v10H.5zM.5 4h12M.5 7h12M4.500.5v10M8.500.5v10" />
            </svg>
          </button>
          <button aria-label="页面布局" className="flex flex-1 items-center justify-center">
            <svg width="12" height="12" viewBox="0 0 12 12" fill="#b9bcc4" stroke="#5d6068">
              <path d="M.5.5h11v11H.5z" />
              <path d="M3.500 2.500h5v7h-5zM4.500 5h3M4.500 7h3" fill="#fff" />
            </svg>
          </button>
          <button aria-label="分页预览" className="flex flex-1 items-center justify-center">
            <svg width="13" height="12" viewBox="0 0 13 12" fill="#b9bcc4" stroke="#5d6068">
              <path d="M.5.5h12v11H.5z" />
              <path d="M.5.5h4v7h-4zM4.500.5h4v7h-4z" fill="#fff" />
            </svg>
          </button>
        </div>
        <span className="mr-2.5 ml-2.5">100%</span>
        <ZoomButton label="zoom out" d="M5 8.500h7" />
        <input
          type="range"
          aria-label="显示比例"
          min={0}
          max={200}
          defaultValue={100}
          className="h-px w-[101px] appearance-none bg-[#2b2b2b] [&::-webkit-slider-thumb]:h-[13px] [&::-webkit-slider-thumb]:w-[9px] [&::-webkit-slider-thumb]:appearance-none [&::-webkit-slider-thumb]:rounded-b-full [&::-webkit-slider-thumb]:border [&::-webkit-slider-thumb]:border-[#555] [&::-webkit-slider-thumb]:bg-[#eceded]"
        />
        <ZoomButton label="zoom in" d="M4.500 8.500h8M8.500 4.500v8" />
      </div>
    </footer>
  );
}

export default function App() {
  return (
    <div className="flex h-screen flex-col overflow-hidden font-['Noto_Sans','Noto_Sans_CJK_SC',sans-serif]">
      <TitleBar />
      <Ribbon />
      <FormulaBar />
      <main className="flex min-h-0 flex-1">
        <div className="min-w-0 flex-1 overflow-hidden">
          <Sheet />
        </div>
        <VerticalScroll />
      </main>
      <SheetBar />
      <StatusBar />
      <div className="flex h-2 shrink-0 overflow-hidden bg-[#1d1e18]">
        <div className="ml-[533px] w-40 bg-[#a9622a]" />
        <div className="ml-[482px] w-40 bg-[#50514a]" />
        <span className="mt-[3px] mr-[30px] ml-auto text-[12px] leading-4 text-white">18:18</span>
      </div>
    </div>
  );
}
